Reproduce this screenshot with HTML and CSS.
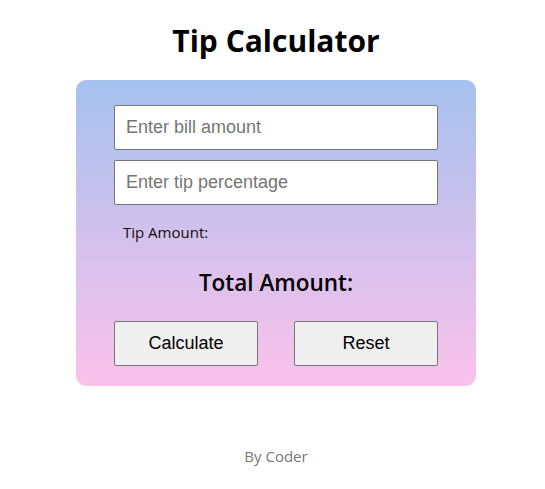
FILE: index.html
```html
<!DOCTYPE html>
<html>
<head>
<meta charset="utf-8">
<link rel="stylesheet" href="styles.css">
</head>
<body>
<div class="page">
  <h1 class="title">Tip Calculator</h1>
  <div class="card">
    <input class="field" type="text" placeholder="Enter bill amount">
    <input class="field" type="text" placeholder="Enter tip percentage">
    <p class="tip">Tip Amount:</p>
    <h3 class="total">Total Amount:</h3>
    <div class="actions">
      <button class="btn">Calculate</button>
      <button class="btn">Reset</button>
    </div>
  </div>
  <p class="footer">By Coder</p>
</div>
</body>
</html>
```
FILE: styles.css
```css
* { box-sizing: border-box; }
html, body { margin: 0; padding: 0; background: #fff; }
body { font-family: "Open Sans", "Noto Sans", sans-serif; }
.page {
  display: flex;
  flex-direction: column;
  align-items: center;
  padding: 14px 0 0 7px;
}
.title {
  margin: 0 0 12px;
  font-size: 30px;
  font-weight: 700;
  line-height: 54px;
  color: #000;
}
.card {
  width: 400px;
  padding: 25px 38px 20px;
  border-radius: 10px;
  background: linear-gradient(to bottom, #a6c1ee, #fbc2eb);
  display: flex;
  flex-direction: column;
}
.field {
  width: 100%;
  height: 45px;
  margin: 0 0 10px;
  padding: 0 11px;
  border: 1px solid #767676;
  border-radius: 2px;
  background: #fff;
  font-family: "Liberation Sans", Arial, sans-serif;
  font-size: 18px;
  color: #000;
}
.field::placeholder { color: #757575; }
.tip {
  margin: 7px 0 0 9px;
  font-size: 15px;
  line-height: 20px;
  color: #1a0a0a;
}
.total {
  margin: 26px 0 0;
  text-align: center;
  font-size: 22.5px;
  font-weight: 600;
  line-height: 30px;
  color: #000;
}
.actions {
  display: flex;
  justify-content: space-between;
  margin-top: 23px;
}
.btn {
  width: 144px;
  height: 45px;
  border: 1px solid #767676;
  border-radius: 2px;
  background: #efefef;
  font-family: "Liberation Sans", Arial, sans-serif;
  font-size: 18px;
  color: #000;
}
.footer {
  margin: 60px 0 0;
  font-size: 15px;
  color: #777;
}
```
